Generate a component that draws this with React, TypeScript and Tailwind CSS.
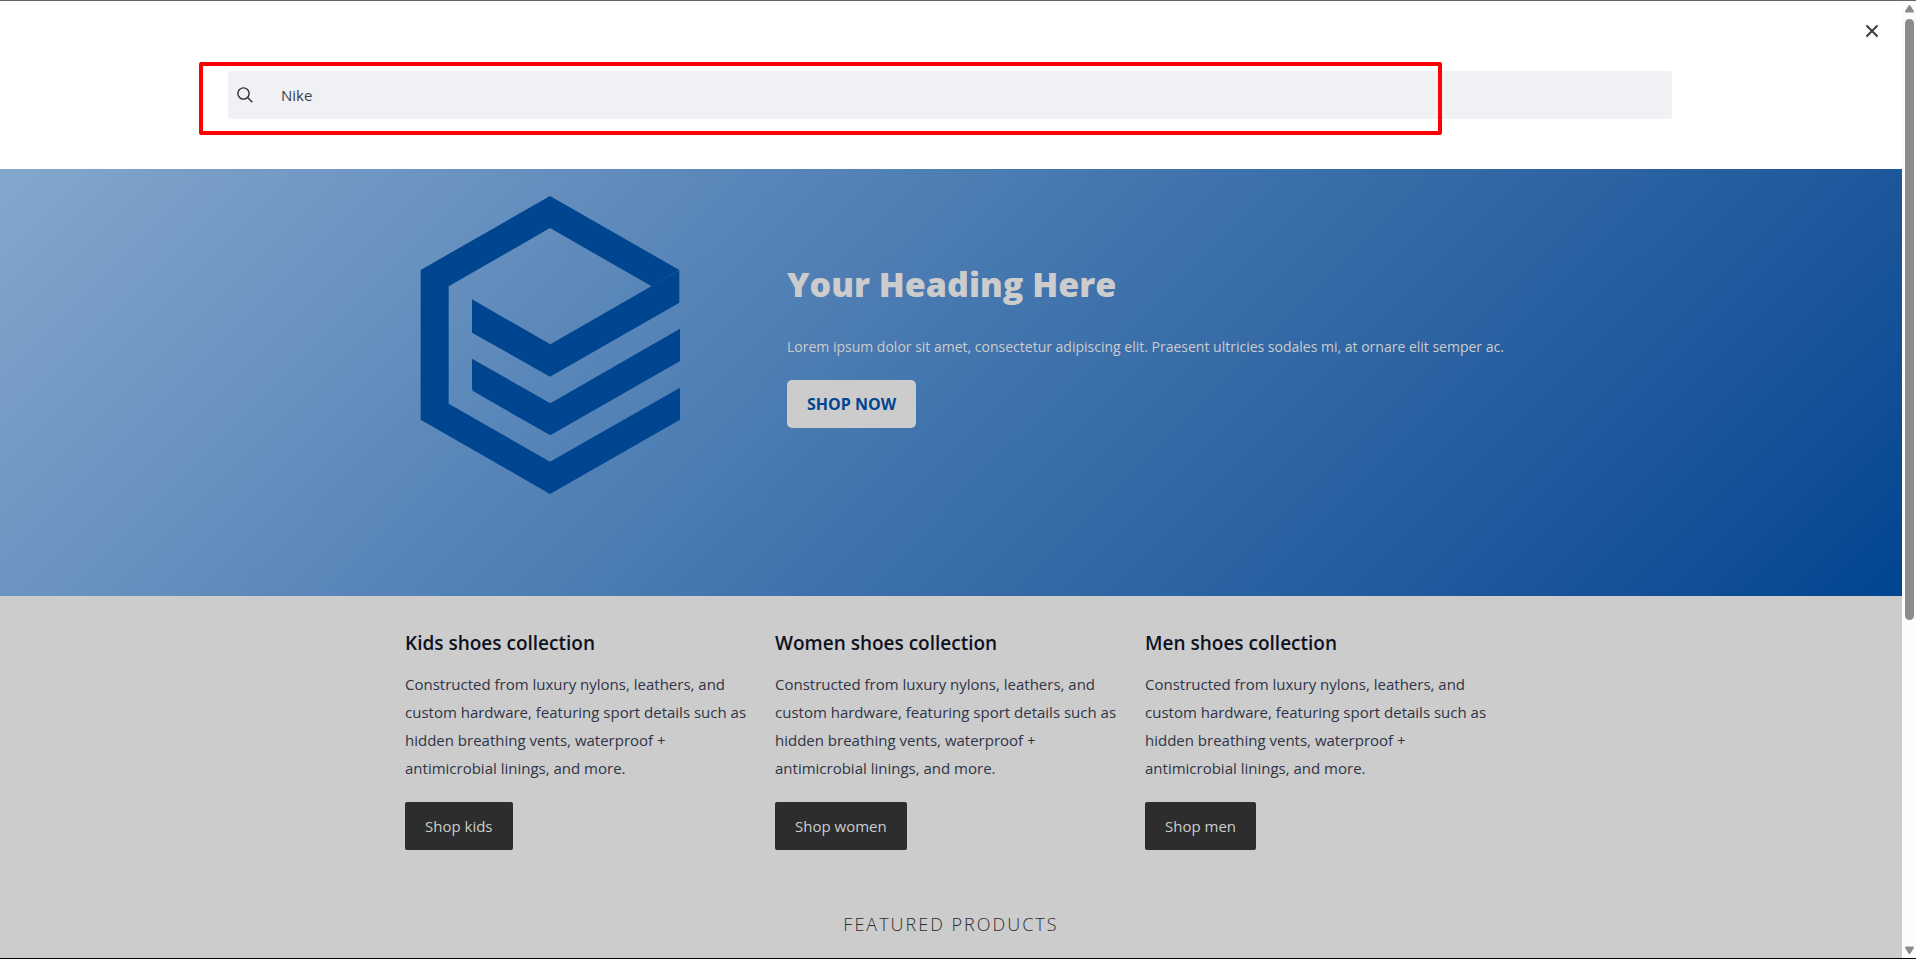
const collections = [
  { title: "Kids shoes collection", action: "Shop kids" },
  { title: "Women shoes collection", action: "Shop women" },
  { title: "Men shoes collection", action: "Shop men" },
];

function Logo() {
  return (
    <svg viewBox="60 48 780 894" className="h-[298px] w-[260px] shrink-0 fill-[#004590]" aria-hidden="true">
      <path d="M450 48 838 270 755 319 450 144 146 319V671L450 845 840 623V719L450 942 62 719V270Z" />
      <path d="M838 271V368L450 590 216 458V358L451 493 754 319Z" />
      <path d="M840 446V543L451 766 220 634Q216 631 216 624V536L451 670Z" />
    </svg>
  );
}

function SearchPanel() {
  return (
    <div className="relative h-[168px] bg-white pt-[70px] pr-[230px] pl-[228px]">
      <label className="flex h-12 items-center rounded-[3px] bg-[#f0f1f4] pl-2 text-[#2d2d2d]">
        <svg viewBox="0 0 18 18" className="size-[18px] fill-none stroke-current stroke-[1.4]" aria-label="Search">
          <circle cx="7.5" cy="7.5" r="5.6" />
          <path d="m11.6 11.6 4.7 4.7" />
        </svg>
        <input
          type="text"
          defaultValue="Nike"
          className="ml-[27px] min-w-0 flex-1 bg-transparent text-[15px] text-[#3a3d4d] outline-none"
        />
      </label>
      <button type="button" aria-label="Close" className="absolute top-5 right-5 text-[#3a3a3a]">
        <svg viewBox="0 0 20 20" className="size-5 fill-none stroke-current stroke-2" aria-hidden="true">
          <path d="m4.5 4.5 11 11m0-11-11 11" />
        </svg>
      </button>
      <div className="pointer-events-none absolute top-[61px] right-[460px] left-[199px] h-[73px] rounded-[2px] border-4 border-[#ff0000]" />
    </div>
  );
}

function Hero() {
  return (
    <section className="h-[427px] bg-linear-135 from-[#84a7cc] via-[#4275ae] to-[#004590]">
      <div className="flex gap-[107px] pt-[27px] pl-[420px] text-[#cccccc]">
        <Logo />
        <div className="pt-[66px]">
          <h1 className="text-[34px] leading-[44px] font-extrabold">Your Heading Here</h1>
          <p className="mt-[29px] text-[14px] leading-6">
            Lorem ipsum dolor sit amet, consectetur adipiscing elit. Praesent ultricies sodales mi, at ornare elit semper ac.
          </p>
          <button type="button" className="mt-[21px] h-12 rounded-[5px] bg-[#cccccc] px-5 text-[16px] font-bold text-[#004590]">
            SHOP NOW
          </button>
        </div>
      </div>
    </section>
  );
}

function Scrollbar() {
  return (
    <div className="flex w-[14px] shrink-0 flex-col items-center bg-[#fcfcfc] py-1" aria-hidden="true">
      <svg viewBox="0 0 9 8" className="h-2 w-[9px] fill-[#8b8b8b]">
        <path d="M3.6 0.6Q4.5-.4 5.4.6L8.8 6Q9.2 7.6 8 7.6H1Q-.2 7.6.2 6Z" />
      </svg>
      <div className="mt-[6px] h-[601px] w-[9px] rounded-full bg-[#8b8b8b]" />
      <svg viewBox="0 0 9 8" className="mt-auto h-2 w-[9px] rotate-180 fill-[#8b8b8b]">
        <path d="M3.6 0.6Q4.5-.4 5.4.6L8.8 6Q9.2 7.6 8 7.6H1Q-.2 7.6.2 6Z" />
      </svg>
    </div>
  );
}

export default function App() {
  return (
    <div className="flex h-screen overflow-hidden border-t border-b border-t-[#666666] border-b-black bg-[#cccccc] font-['Segoe_UI','Open_Sans',sans-serif]">
      <main className="min-w-0 flex-1 overflow-hidden">
        <SearchPanel />
        <Hero />
        <section className="mx-auto grid max-w-[1092px] grid-cols-3 gap-[18px] pt-[33px]">
          {collections.map(({ title, action }) => (
            <article key={title}>
              <h2 className="text-[19px] leading-7 font-semibold text-[#0e1122]">{title}</h2>
              <p className="mt-[13px] text-[15px] leading-7 text-[#2f3447]">
                Constructed from luxury nylons, leathers, and custom hardware, featuring sport details such as hidden breathing vents, waterproof + antimicrobial linings, and more.
              </p>
              <button type="button" className="mt-5 h-12 rounded-[2px] bg-[#2d2d2d] px-5 text-[15px] text-[#cccccc]">
                {action}
              </button>
            </article>
          ))}
        </section>
        <h2 className="mt-[60px] text-center text-[18px] leading-7 font-light tracking-[2px] text-[#2d2d2d]">FEATURED PRODUCTS</h2>
      </main>
      <Scrollbar />
    </div>
  );
}
